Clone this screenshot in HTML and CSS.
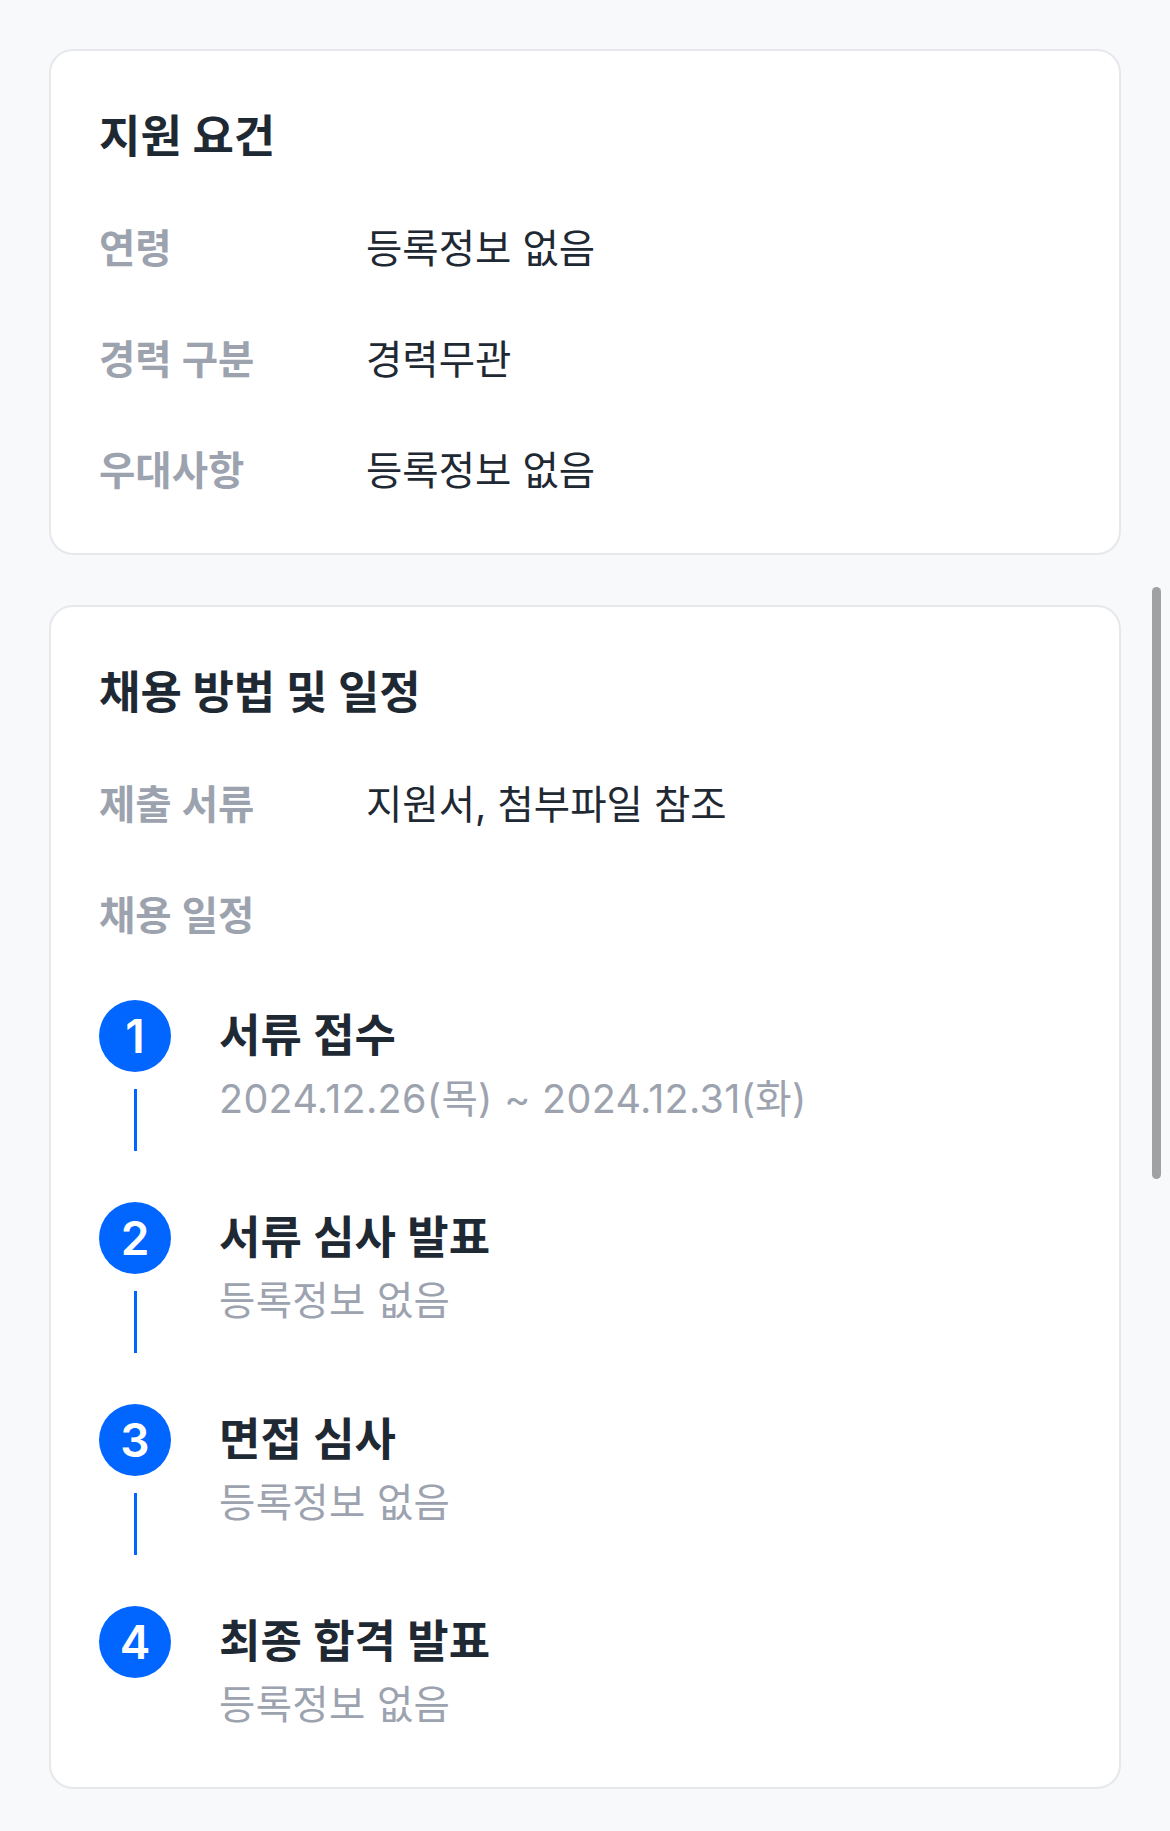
FILE: index.html
```html
<!DOCTYPE html>
<html lang="ko">
<head>
  <meta charset="UTF-8">
  <title>채용 정보</title>
  <link rel="stylesheet" href="styles.css">
</head>
<body>
<div class="page">
  <div class="card">
    <h2 class="card-title">지원 요건</h2>
    <div class="row">
      <span class="label">연령</span>
      <span class="value">등록정보 없음</span>
    </div>
    <div class="row">
      <span class="label">경력 구분</span>
      <span class="value">경력무관</span>
    </div>
    <div class="row">
      <span class="label">우대사항</span>
      <span class="value">등록정보 없음</span>
    </div>
  </div>

  <div class="card card-last">
    <h2 class="card-title">채용 방법 및 일정</h2>
    <div class="row">
      <span class="label">제출 서류</span>
      <span class="value">지원서, 첨부파일 참조</span>
    </div>
    <div class="row">
      <span class="label">채용 일정</span>
    </div>

    <ul class="steps">
      <li class="step">
        <div class="step-mark">
          <span class="step-num">1</span>
          <span class="step-line"></span>
        </div>
        <div class="step-body">
          <div class="step-title">서류 접수</div>
          <div class="step-date">2024.12.26(목) ~ 2024.12.31(화)</div>
        </div>
      </li>
      <li class="step">
        <div class="step-mark">
          <span class="step-num">2</span>
          <span class="step-line"></span>
        </div>
        <div class="step-body">
          <div class="step-title">서류 심사 발표</div>
          <div class="step-date">등록정보 없음</div>
        </div>
      </li>
      <li class="step">
        <div class="step-mark">
          <span class="step-num">3</span>
          <span class="step-line"></span>
        </div>
        <div class="step-body">
          <div class="step-title">면접 심사</div>
          <div class="step-date">등록정보 없음</div>
        </div>
      </li>
      <li class="step">
        <div class="step-mark">
          <span class="step-num">4</span>
        </div>
        <div class="step-body">
          <div class="step-title">최종 합격 발표</div>
          <div class="step-date">등록정보 없음</div>
        </div>
      </li>
    </ul>
  </div>

  <div class="scrollbar"></div>
</div>
</body>
</html>
```

FILE: styles.css
```css
* {
  margin: 0;
  padding: 0;
  list-style: none;
  box-sizing: border-box;
}
body {
  background-color: #f8f9fb;
  font-family: Inter, "Noto Sans CJK KR", sans-serif;
  color: #1f2933;
}

.page {
  position: relative;
  padding: 49px 49px 44px;
  display: flex;
  flex-direction: column;
  gap: 50px;
}

.card {
  background: #fff;
  border: 2px solid #e6e8ec;
  border-radius: 24px;
  padding: 56px 48px 54px;
  display: flex;
  flex-direction: column;
  gap: 56px;
}

.card-title {
  font-size: 45px;
  line-height: 59px;
  font-weight: 700;
  color: #1f2933;
}

.row {
  display: flex;
  font-size: 39.5px;
  line-height: 55px;
}
.row .label {
  width: 267px;
  flex-shrink: 0;
  font-weight: 600;
  color: #9ca3af;
}
.row .value {
  color: #1f2933;
}

/* 채용 일정 */
.steps {
  display: flex;
  flex-direction: column;
  gap: 51px;
}
.step {
  display: flex;
  gap: 48px;
}
.step-mark {
  width: 72px;
  display: flex;
  flex-direction: column;
  align-items: center;
}
.step-num {
  width: 72px;
  height: 72px;
  border-radius: 50%;
  background: #0066ff;
  color: #fff;
  font-size: 46px;
  font-weight: 600;
  display: flex;
  align-items: center;
  justify-content: center;
}
.step-line {
  width: 3px;
  height: 62px;
  margin-top: 17px;
  background: #0066ff;
}
.step-title {
  font-size: 45px;
  line-height: 72px;
  font-weight: 600;
  color: #1f2933;
}
.step-date {
  font-size: 39.5px;
  line-height: 55px;
  color: #9ca3af;
  letter-spacing: 0.3px;
}

.scrollbar {
  position: absolute;
  right: 9px;
  top: 587px;
  width: 9px;
  height: 592px;
  border-radius: 5px;
  background: #a1a1a4;
}
```
